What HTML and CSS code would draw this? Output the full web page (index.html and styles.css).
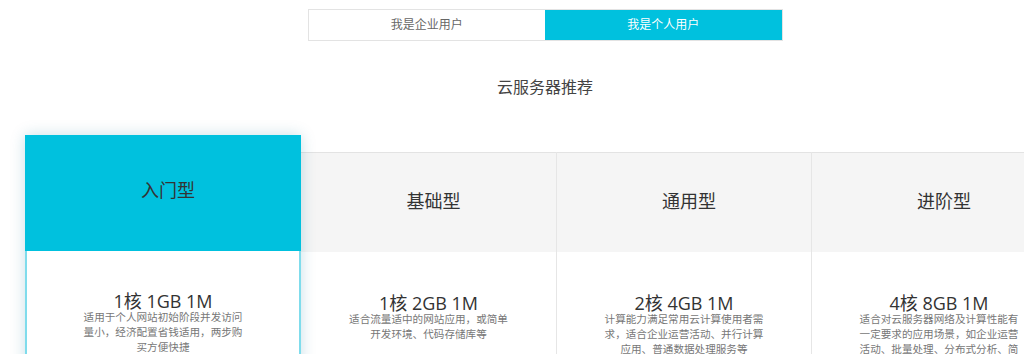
FILE: index.html
```html
<!DOCTYPE html>
<html lang="zh-CN">
<head>
  <meta charset="UTF-8">
  <title>云服务器推荐</title>
  <link rel="stylesheet" href="styles.css">
</head>
<body>

<div class="page">
  <div class="tabs">
    <div class="tab">我是企业用户</div>
    <div class="tab active">我是个人用户</div>
  </div>

  <h2 class="section-title">云服务器推荐</h2>

  <div class="plans">
    <div class="plan active">
      <div class="plan-head">入门型</div>
      <div class="plan-body">
        <div class="spec">1核 1GB 1M</div>
        <p class="desc">适用于个人网站初始阶段并发访问量小，经济配置省钱适用，两步购买方便快捷</p>
      </div>
    </div>
    <div class="plan">
      <div class="plan-head">基础型</div>
      <div class="plan-body">
        <div class="spec">1核 2GB 1M</div>
        <p class="desc">适合流量适中的网站应用，或简单开发环境、代码存储库等</p>
      </div>
    </div>
    <div class="plan">
      <div class="plan-head">通用型</div>
      <div class="plan-body">
        <div class="spec">2核 4GB 1M</div>
        <p class="desc">计算能力满足常用云计算使用者需求，适合企业运营活动、并行计算应用、普通数据处理服务等</p>
      </div>
    </div>
    <div class="plan">
      <div class="plan-head">进阶型</div>
      <div class="plan-body">
        <div class="spec">4核 8GB 1M</div>
        <p class="desc">适合对云服务器网络及计算性能有一定要求的应用场景，如企业运营活动、批量处理、分布式分析、简单应用等</p>
      </div>
    </div>
  </div>
</div>

</body>
</html>
```

FILE: styles.css
```css
body {
  margin: 0;
  background: #fff;
  font-family: 'Open Sans', 'Noto Sans CJK SC', sans-serif;
  color: #333;
  overflow: hidden;
}
.page {
  width: 1090px;
  padding-top: 9px;
}
.tabs {
  width: 475px;
  margin: 0 auto;
  display: flex;
  border: 1px solid #e3e3e3;
  box-sizing: border-box;
  height: 32px;
}
.tab {
  flex: 1;
  text-align: center;
  font-size: 12px;
  line-height: 30px;
  color: #666;
  background: #fff;
}
.tab.active {
  background: #00c1de;
  color: #fff;
}
.section-title {
  margin: 34px 0 0;
  text-align: center;
  font-size: 16px;
  font-weight: normal;
  line-height: 24px;
  color: #444;
}
.plans {
  display: flex;
  align-items: flex-start;
  margin-top: 53px;
  padding-left: 46px;
}
.plan {
  width: 255px;
  flex-shrink: 0;
  border-left: 1px solid #e6e6e6;
  box-sizing: border-box;
}
.plan-head {
  height: 100px;
  background: #f5f5f5;
  border-top: 1px solid #e3e3e3;
  box-sizing: border-box;
  text-align: center;
  padding-left: 10px;
  font-size: 18px;
  line-height: 97px;
  color: #333;
}
.plan-body {
  height: 160px;
  padding-top: 42px;
  box-sizing: border-box;
  text-align: center;
}
.spec {
  font-size: 18px;
  line-height: 18px;
  color: #333;
}
.desc {
  width: 162px;
  margin: 0 auto;
  font-size: 10.6px;
  line-height: 15.2px;
  color: #777;
}
.plan.active {
  width: 276px;
  margin-top: -17px;
  margin-left: -21px;
  border-left: none;
  position: relative;
  z-index: 1;
  background: #fff;
  box-shadow: 0 0 14px rgba(0, 110, 140, 0.22);
}
.plan.active + .plan {
  border-left: none;
}
.plan.active .plan-head {
  height: 116px;
  background: #00c1de;
  border-top: none;
  line-height: 110px;
}
.plan.active .plan-body {
  border-left: 2px solid #7fdcec;
  border-right: 2px solid #7fdcec;
  padding-top: 41px;
}
```
